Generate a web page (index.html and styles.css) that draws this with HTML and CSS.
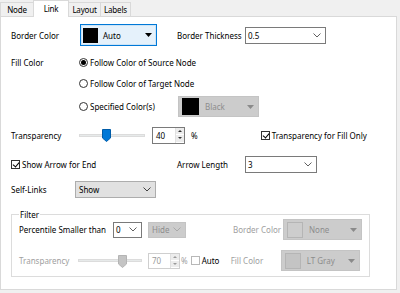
FILE: index.html
```html
<!DOCTYPE html>
<html>
<head>
<meta charset="utf-8">
<link rel="stylesheet" href="styles.css">
</head>
<body>
<div class="tabs">
  <div class="tab">Node</div>
  <div class="tab active">Link</div>
  <div class="tab">Layout</div>
  <div class="tab">Labels</div>
</div>
<div class="panel">
  <div class="row r1">
    <span class="lbl w69">Border Color</span>
    <div class="combo focus w77 h22">
      <span class="sw black"></span><span class="ctext">Auto</span>
      <svg class="tri" width="7" height="4" viewBox="0 0 7 4"><path d="M0 0h7L3.5 4z" fill="#000"/></svg>
    </div>
    <span class="lbl w68 ml20">Border Thickness</span>
    <div class="combo edit w81 h17"><span class="ctext">0.5</span>
      <svg class="chev" width="8" height="5" viewBox="0 0 8 5"><path d="M0.5 0.5L4 4L7.5 0.5" fill="none" stroke="#606060" stroke-width="1"/></svg>
    </div>
  </div>

  <div class="row r2">
    <span class="lbl w68">Fill Color</span>
    <span class="radio on"></span><span class="rtext">Follow Color of Source Node</span>
  </div>
  <div class="row r3 indent79">
    <span class="radio"></span><span class="rtext">Follow Color of Target Node</span>
  </div>
  <div class="row r4 indent79">
    <span class="radio"></span><span class="rtext w86">Specified Color(s)</span>
    <div class="combo dis w81 h21">
      <span class="sw black big"></span><span class="ctext">Black</span>
      <svg class="tri" width="7" height="4" viewBox="0 0 7 4"><path d="M0 0h7L3.5 4z" fill="#8a8a8a"/></svg>
    </div>
  </div>

  <div class="row r5">
    <span class="lbl w68">Transparency</span>
    <div class="slider w66">
      <span class="track"></span>
      <svg class="thumb t40" width="9" height="13" viewBox="0 0 9 13"><path d="M0.5 0.5h8v8.5L4.5 12.5L0.5 9z" fill="#0078d7" stroke="#005ca8" stroke-width="1"/></svg>
    </div>
    <div class="spin w33 h17 ml7">
      <span class="stext">40</span>
      <span class="sbtns"><span class="sb up"></span><span class="sb dn"></span></span>
    </div>
    <span class="pct">%</span>
    <span class="chk on ml63"></span><span class="ctext2">Transparency for Fill Only</span>
  </div>

  <div class="row r6">
    <span class="chk on"></span><span class="ctext2 w155">Show Arrow for End</span>
    <span class="lbl w68">Arrow Length</span>
    <div class="combo edit w72 h17"><span class="ctext">3</span>
      <svg class="chev" width="8" height="5" viewBox="0 0 8 5"><path d="M0.5 0.5L4 4L7.5 0.5" fill="none" stroke="#606060" stroke-width="1"/></svg>
    </div>
  </div>

  <div class="row r7">
    <span class="lbl w64">Self-Links</span>
    <div class="combo btn w81 h17"><span class="ctext">Show</span>
      <svg class="chev" width="8" height="5" viewBox="0 0 8 5"><path d="M0.5 0.5L4 4L7.5 0.5" fill="none" stroke="#404040" stroke-width="1"/></svg>
    </div>
  </div>

  <fieldset class="group">
    <legend>Filter</legend>
    <div class="row g1">
      <span class="lbl w94">Percentile Smaller than</span>
      <div class="combo edit w29 h16"><span class="ctext">0</span>
        <svg class="chev" width="8" height="5" viewBox="0 0 8 5"><path d="M0.5 0.5L4 4L7.5 0.5" fill="none" stroke="#606060" stroke-width="1"/></svg>
      </div>
      <div class="combo dis w38 h16 ml6"><span class="ctext">Hide</span>
        <svg class="chev" width="8" height="5" viewBox="0 0 8 5"><path d="M0.5 0.5L4 4L7.5 0.5" fill="none" stroke="#a8a8a8" stroke-width="1"/></svg>
      </div>
      <span class="lbl dtext w50 ml47">Border Color</span>
      <div class="combo dis w79 h21">
        <span class="sw empty"></span><span class="ctext">None</span>
        <svg class="tri" width="7" height="4" viewBox="0 0 7 4"><path d="M0 0h7L3.5 4z" fill="#8a8a8a"/></svg>
      </div>
    </div>
    <div class="row g2">
      <span class="lbl dtext w59">Transparency</span>
      <div class="slider w64">
        <span class="track"></span>
        <svg class="thumb t70" width="9" height="13" viewBox="0 0 9 13"><path d="M0.5 0.5h8v8.5L4.5 12.5L0.5 9z" fill="#c4c4c4" stroke="#b4b4b4" stroke-width="1"/></svg>
      </div>
      <div class="spin dspin w32 h16 ml6">
        <span class="stext">70</span>
        <span class="sbtns"><span class="sb up"></span><span class="sb dn"></span></span>
      </div>
      <span class="pct dtext p2">%</span>
      <span class="chk dchk ml3"></span><span class="ctext2 dtext2 w29">Auto</span>
      <span class="lbl dtext w50">Fill Color</span>
      <div class="combo dis w79 h21">
        <span class="sw empty gray"></span><span class="ctext">LT Gray</span>
        <svg class="tri" width="7" height="4" viewBox="0 0 7 4"><path d="M0 0h7L3.5 4z" fill="#8a8a8a"/></svg>
      </div>
    </div>
  </fieldset>
</div>
</body>
</html>
```
FILE: styles.css
```css
* { box-sizing: border-box; }
html, body { margin: 0; padding: 0; }
body {
  width: 400px; height: 293px; overflow: hidden;
  background: #f0f0f0;
  font-family: "Noto Sans", "Open Sans", sans-serif;
  font-size: 8px;
  color: #000;
}
.tabs { display: flex; height: 16px; align-items: flex-end; position: relative; z-index: 1; }
.tab {
  height: 14px; border: 1px solid #d9d9d9; border-bottom: none; margin-right: -1px;
  background: #f0f0f0; display: flex; align-items: center; justify-content: center;
  font-size: 8px; letter-spacing: -0.2px;
}
.tab:nth-child(1) { width: 34px; }
.tab:nth-child(2) { width: 36px; }
.tab:nth-child(3) { width: 33px; }
.tab:nth-child(4) { width: 31px; }
.tab.active { height: 17px; background: #fff; margin-bottom: -1px; padding-bottom: 2px; }
.panel {
  width: 397px; height: 274px; background: #fff; border: 1px solid #d9d9d9;
  padding-left: 10px;
}
.row { display: flex; align-items: center; white-space: nowrap; }
.r1 { height: 22px; margin-top: 7px; }
.r2 { height: 16px; margin-top: 8px; }
.r3 { height: 16px; margin-top: 5px; }
.r4 { height: 21px; margin-top: 5px; }
.r5 { height: 18px; margin-top: 9px; }
.r6 { height: 17px; margin-top: 12px; }
.r7 { height: 17px; margin-top: 8px; }
.indent79 { padding-left: 68px; }

.lbl { display: inline-block; flex: none; }
.w29 { width: 29px; } .w32 { width: 32px; } .w33 { width: 33px; } .w38 { width: 38px; }
.w50 { width: 50px; } .w59 { width: 59px; } .w64 { width: 64px; } .w66 { width: 66px; }
.w68 { width: 68px; } .w69 { width: 69px; } .w72 { width: 72px; } .w77 { width: 77px; }
.w79 { width: 79px; } .w81 { width: 81px; } .w86 { width: 88px; } .w94 { width: 94px; }
.w155 { width: 155px; }
.h16 { height: 16px; } .h17 { height: 17px; } .h21 { height: 21px; } .h22 { height: 22px; }
.ml3 { margin-left: 3px; } .ml6 { margin-left: 6px; } .ml7 { margin-left: 7px; }
.ml20 { margin-left: 20px; } .ml47 { margin-left: 47px; } .ml63 { margin-left: 63px; }

.combo {
  flex: none; display: flex; align-items: center; position: relative;
  border: 1px solid #7a7a7a; background: #fff; padding-left: 2px;
}
.combo .ctext { flex: 1; }
.combo .tri, .combo .chev { margin-right: 4px; flex: none; }
.combo.focus { border: 1px solid #0078d7; background: #e5f1fb; padding-left: 2px; box-shadow: inset 0 0 0 1px #cce4f7; }
.combo.focus .ctext { margin-left: 5px; }
.combo.edit { border-color: #7a7a7a; }
.combo.btn { background: #e1e1e1; border-color: #adadad; padding-left: 3px; }
.combo.dis { background: #cccccc; border-color: #c4c4c4; color: #8c8c8c; padding-left: 3px; }
.sw { width: 15px; height: 15px; flex: none; }
.sw.black { background: #000; }
.sw.big { width: 17px; height: 17px; margin-left: 0; }
.combo.dis .sw + .ctext { margin-left: 6px; }
.sw.empty { width: 16px; height: 16px; border: 1px solid #b5b5b5; background: #cdcdcd; }
.sw.empty.gray { background: #c4c4c4; }

.radio {
  width: 9px; height: 9px; border: 1px solid #333; border-radius: 50%; flex: none;
  display: inline-flex; align-items: center; justify-content: center; background: #fff;
}
.radio.on::after { content: ""; width: 5px; height: 5px; border-radius: 50%; background: #000; }
.rtext { margin-left: 2px; display: inline-block; }
.w86.rtext { width: 88px; }

.slider { position: relative; height: 14px; flex: none; display: flex; align-items: center; }
.track { display: block; width: 100%; height: 3px; background: #e7eaea; border: 1px solid #dcdcdc; }
.thumb { position: absolute; top: 1px; }
.thumb.t40 { left: 23px; }
.thumb.t70 { left: 40px; }

.spin { flex: none; display: flex; border: 1px solid #7a7a7a; background: #fff; }
.spin .stext { flex: 1; padding-left: 3px; display: flex; align-items: center; }
.sbtns { width: 9px; display: flex; flex-direction: column; border-left: 1px solid #e0e0e0; }
.sb { flex: 1; background: #ececec; display: flex; align-items: center; justify-content: center; border-bottom: 1px solid #fff; }
.sb::after { content: ""; border-left: 2px solid transparent; border-right: 2px solid transparent; }
.sb.up::after { border-bottom: 2px solid #333; }
.sb.dn::after { border-top: 2px solid #333; }
.dspin { border-color: #cfcfcf; color: #9a9a9a; }
.dspin .sb::after { border-bottom-color: #999; border-top-color: #999; }
.pct { margin-left: 6px; }
.pct.p2 { margin-left: 1px; }

.chk {
  width: 9px; height: 9px; border: 1px solid #333; flex: none; position: relative; background: #fff;
}
.chk.on::after {
  content: ""; position: absolute; left: 2px; top: 0px; width: 3px; height: 5px;
  border-right: 1px solid #000; border-bottom: 1px solid #000; transform: rotate(40deg);
}
.dchk { border-color: #b8b8b8; }
.ctext2 { margin-left: 2px; display: inline-block; }
.dtext { color: #a0a0a0; }
.dtext2 { color: #000; }

.group {
  margin: 12px 0 0 0; width: 359px; height: 67px; border: 1px solid #dcdcdc;
  padding: 0 0 0 7px; position: relative;
}
.group legend { padding: 0 1px; margin-left: 0; line-height: 9px; font-size: 8px; }
.g1 { height: 21px; margin-top: 0px; }
.g2 { height: 21px; margin-top: 10px; }
```
